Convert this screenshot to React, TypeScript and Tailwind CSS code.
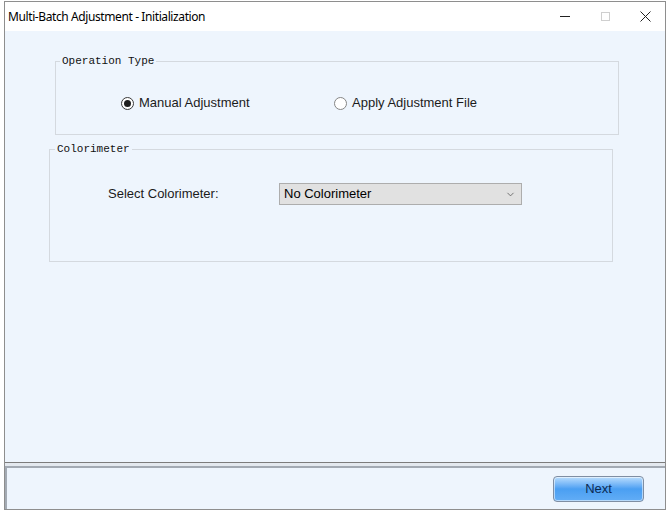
import { ChevronDown } from "lucide-react";

function Radio({ checked, label }: { checked?: boolean; label: string }) {
  return (
    <div className="flex items-center h-[16px]">
      <span
        className={`w-[13px] h-[13px] rounded-full border bg-white flex items-center justify-center ${
          checked ? "border-[#3a3a3a]" : "border-[#858585]"
        }`}
      >
        {checked && <span className="w-[7px] h-[7px] rounded-full bg-[#1f1f1f]" />}
      </span>
      <span className="ml-[5px] text-[13px] leading-[16px] text-[#1b1b1b]">{label}</span>
    </div>
  );
}

export default function App() {
  const legendFont = { fontFamily: '"Liberation Mono", monospace' };

  return (
    <div
      className="w-[671px] h-[512px] bg-white pt-[1px] pl-[4px] overflow-hidden"
      style={{ fontFamily: '"Liberation Sans", Arial, sans-serif' }}
    >
      <div className="w-[662px] h-[509px] border border-[#8e8e8e] flex flex-col bg-[#eef5fd]">
        {/* title bar */}
        <div className="h-[29px] bg-white flex items-center justify-between">
          <span
            className="pl-[3px] text-[12px] tracking-[-0.4px] text-black"
            style={{ fontFamily: '"Noto Sans", sans-serif' }}
          >
            Multi-Batch Adjustment - Initialization
          </span>
          <div className="flex items-center h-full">
            <div className="w-[40px] h-full flex items-center justify-center">
              <span className="w-[10px] h-[1px] bg-[#222]" />
            </div>
            <div className="w-[40px] h-full flex items-center justify-center">
              <span className="w-[9px] h-[9px] border border-[#cfcfcf]" />
            </div>
            <div className="w-[40px] h-full flex items-center justify-center">
              <svg width="11" height="11" viewBox="0 0 11 11">
                <path d="M0.5 0.5 L10.5 10.5 M10.5 0.5 L0.5 10.5" stroke="#222" strokeWidth="1" />
              </svg>
            </div>
          </div>
        </div>

        {/* content */}
        <div className="h-[432px] border-b border-[#7c7c7c] pt-[24px]">
          <fieldset className="ml-[50px] w-[564px] h-[80px] border border-[#d4d9df]">
            <legend className="ml-[4px] px-[2px] text-[11px] leading-[12px] text-[#111]" style={legendFont}>
              Operation Type
            </legend>
            <div className="flex pt-[28px] pl-[65px]">
              <div className="w-[213px]">
                <Radio checked label="Manual Adjustment" />
              </div>
              <Radio label="Apply Adjustment File" />
            </div>
          </fieldset>

          <fieldset className="mt-[8px] ml-[44px] w-[564px] h-[119px] border border-[#d4d9df]">
            <legend className="ml-[5px] px-[2px] text-[11px] leading-[12px] text-[#111]" style={legendFont}>
              Colorimeter
            </legend>
            <div className="flex items-center pt-[28px] pl-[58px]">
              <span className="w-[171px] text-[13px] text-[#1b1b1b]">Select Colorimeter:</span>
              <div className="w-[243px] h-[22px] bg-[#e1e1e1] border border-[#adadad] flex items-center justify-between pl-[4px] pr-[5px]">
                <span className="text-[13px] text-black">No Colorimeter</span>
                <ChevronDown size={11} strokeWidth={1.8} color="#5e5e5e" />
              </div>
            </div>
          </fieldset>
        </div>

        <div className="h-[3px] bg-[#e4e9ef]" />

        {/* footer */}
        <div className="h-[43px] border-t-2 border-l-2 border-[#a3aab3] flex justify-end pt-[8px] pr-[21px]">
          <button className="w-[91px] h-[26px] rounded-[4px] border border-[#7f8ea3] bg-linear-to-b from-[#b9ddfd] via-[#4a9ff2] to-[#62adf6] shadow-[inset_0_0_0_1px_rgba(255,255,255,0.55)] text-[13px] text-[#0d2a52]">
            Next
          </button>
        </div>
      </div>
    </div>
  );
}
